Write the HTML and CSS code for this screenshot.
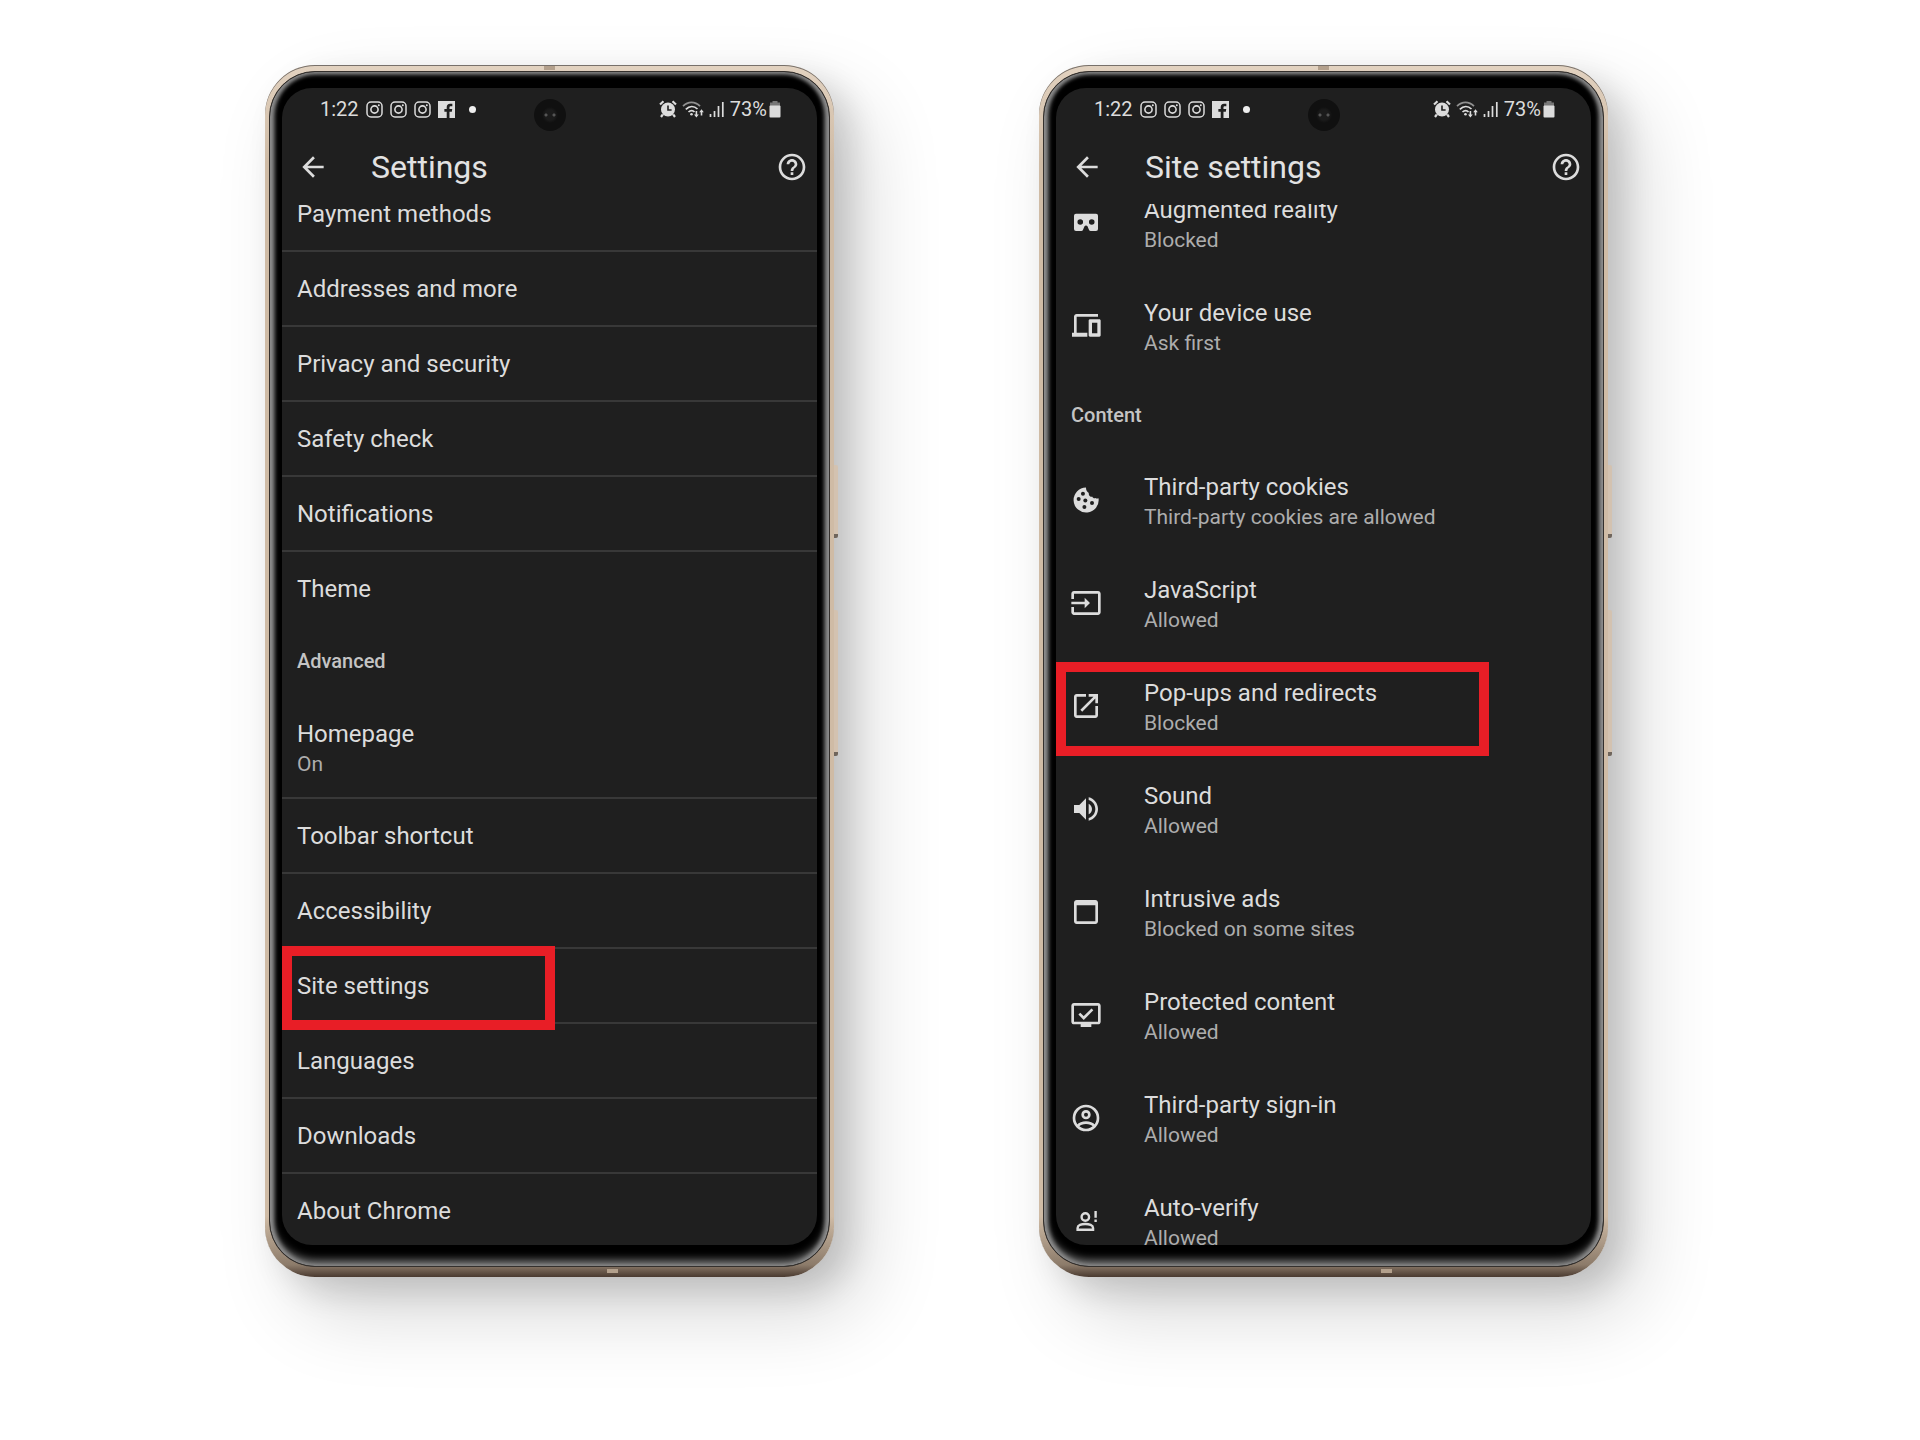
FILE: index.html
```html
<!doctype html>
<html lang="en">
  <head>
    <meta charset="UTF-8" />
    <meta name="viewport" content="width=device-width, initial-scale=1.0" />
    <title>Chrome site settings</title>
    <link rel="stylesheet" href="styles.css">
  </head>
  <body>
    <!-- Shared icons -->
    <svg class="sprite" aria-hidden="true">
      <symbol id="instagram" viewBox="0 0 17 17">
        <rect x="1" y="1" width="15" height="15" rx="4" fill="none" stroke="currentColor" stroke-width="1.5"/>
        <circle cx="8.5" cy="8.5" r="3.6" fill="none" stroke="currentColor" stroke-width="1.6"/>
        <circle cx="12.8" cy="4.3" r="1" fill="currentColor"/>
      </symbol>
      <symbol id="facebook" viewBox="0 0 16 16">
        <path fill="currentColor" d="M0 0h16v16h-5.200v-6h2.200l.400-2.400h-2.600v-1.500c0-.8.4-1.200 1.300-1.200h1.400V2.600h-2.200c-2 0-3.100 1.200-3.100 3.200v1.800H6V10h2.200v6H0z"/>
      </symbol>
      <symbol id="alarm" viewBox="0 0 18 18">
        <circle cx="9" cy="9.500" r="7" fill="currentColor"/>
        <path d="M1 4.500 4.500 1.300M17 4.500 13.500 1.300M3.800 14.500 2 17M14.200 14.500 16 17" stroke="currentColor" stroke-width="2.200"/>
        <path d="M9 5.500V10h3.600" fill="none" stroke="#1f1f1f" stroke-width="1.600"/>
      </symbol>
      <symbol id="wifi" viewBox="0 0 22 18">
        <g fill="none" stroke="currentColor" stroke-width="1.700">
          <path d="M1 6.200C6 1 13 1 18 6.200" opacity=".6"/>
          <path d="M3.800 9.300C7.500 5.600 12 5.600 15.500 9"/>
          <path d="M6.500 12c2-1.900 4.400-1.900 6 0"/>
        </g>
        <circle cx="9.500" cy="14.200" r="1.300" fill="currentColor"/>
        <path fill="currentColor" d="M13.600 11h1.600v3.500h1.600L14.400 17.500 12 14.500h1.600zM18.700 15.500v-3.300h-1.500l2.300-3 2.300 3h-1.500v3.300z"/>
      </symbol>
      <symbol id="signal" viewBox="0 0 16 18">
        <path d="M1.500 17v-3M5.500 17v-6M9.500 17V6M13.800 17V2" stroke="currentColor" stroke-width="1.700"/>
      </symbol>
      <symbol id="battery" viewBox="0 0 12 18">
        <path fill="#777" d="M3.500 1h5v1.500H11V6H1V2.500h2.500z"/>
        <rect x="0.500" y="5.500" width="11" height="12" rx="1" fill="currentColor"/>
      </symbol>
      <symbol id="back" viewBox="0 0 24 24">
        <path fill="currentColor" d="M20 11H7.830l5.590-5.590L12 4l-8 8 8 8 1.410-1.410L7.830 13H20v-2z"/>
      </symbol>
      <symbol id="help" viewBox="0 0 24 24">
        <path fill="currentColor" d="M11 18h2v-2h-2v2zm1-16C6.480 2 2 6.480 2 12s4.480 10 10 10 10-4.480 10-10S17.520 2 12 2zm0 18c-4.410 0-8-3.590-8-8s3.590-8 8-8 8 3.590 8 8-3.590 8-8 8zm0-14c-2.210 0-4 1.790-4 4h2c0-1.100.9-2 2-2s2 .9 2 2c0 2-3 1.750-3 5h2c0-2.250 3-2.500 3-5 0-2.210-1.790-4-4-4z"/>
      </symbol>
    </svg>

    <main class="showcase">
      <!-- Settings -->
      <section class="phone" aria-label="Settings">
        <span class="side-button side-button-power"></span>
        <span class="side-button side-button-volume"></span>
        <div class="bezel">
          <div class="screen">
            <div class="status-bar">
              <span class="camera"></span>
              <span class="time">1:22</span>
              <svg class="app-icon"><use href="#instagram"/></svg>
              <svg class="app-icon"><use href="#instagram"/></svg>
              <svg class="app-icon"><use href="#instagram"/></svg>
              <svg class="app-icon"><use href="#facebook"/></svg>
              <span class="more-dot"></span>
              <div class="status-right">
                <svg class="alarm-icon"><use href="#alarm"/></svg>
                <svg class="wifi-icon"><use href="#wifi"/></svg>
                <svg class="signal-icon"><use href="#signal"/></svg>
                <span class="charge">73%<svg class="battery-icon"><use href="#battery"/></svg></span>
              </div>
            </div>
            <header class="app-bar">
              <button class="icon-button" type="button" aria-label="Back"><svg class="icon"><use href="#back"/></svg></button>
              <h1>Settings</h1>
              <button class="icon-button" type="button" aria-label="Help"><svg class="icon"><use href="#help"/></svg></button>
            </header>
            <nav class="list">
              <div class="list-scroll list-scroll-settings">
                <a class="row" href="#">Payment methods</a>
                <a class="row" href="#">Addresses and more</a>
                <a class="row" href="#">Privacy and security</a>
                <a class="row" href="#">Safety check</a>
                <a class="row" href="#">Notifications</a>
                <a class="row row-last" href="#">Theme</a>
                <h2 class="section-title">Advanced</h2>
                <a class="row row-tall" href="#">Homepage<small>On</small></a>
                <a class="row" href="#">Toolbar shortcut</a>
                <a class="row" href="#">Accessibility</a>
                <a class="row row-marked" href="#">Site settings</a>
                <a class="row" href="#">Languages</a>
                <a class="row" href="#">Downloads</a>
                <a class="row row-last" href="#">About Chrome</a>
              </div>
            </nav>
          </div>
        </div>
      </section>

      <!-- Site settings -->
      <section class="phone" aria-label="Site settings">
        <span class="side-button side-button-power"></span>
        <span class="side-button side-button-volume"></span>
        <div class="bezel">
          <div class="screen">
            <div class="status-bar">
              <span class="camera"></span>
              <span class="time">1:22</span>
              <svg class="app-icon"><use href="#instagram"/></svg>
              <svg class="app-icon"><use href="#instagram"/></svg>
              <svg class="app-icon"><use href="#instagram"/></svg>
              <svg class="app-icon"><use href="#facebook"/></svg>
              <span class="more-dot"></span>
              <div class="status-right">
                <svg class="alarm-icon"><use href="#alarm"/></svg>
                <svg class="wifi-icon"><use href="#wifi"/></svg>
                <svg class="signal-icon"><use href="#signal"/></svg>
                <span class="charge">73%<svg class="battery-icon"><use href="#battery"/></svg></span>
              </div>
            </div>
            <header class="app-bar">
              <button class="icon-button" type="button" aria-label="Back"><svg class="icon"><use href="#back"/></svg></button>
              <h1>Site settings</h1>
              <button class="icon-button" type="button" aria-label="Help"><svg class="icon"><use href="#help"/></svg></button>
            </header>
            <nav class="list">
              <div class="list-scroll list-scroll-site">
                <a class="permission" href="#">
                  <svg class="icon" viewBox="0 0 24 24"><path fill="currentColor" fill-rule="evenodd" d="M4.500 5h15A1.500 1.500 0 0 1 21 6.500v10a1.500 1.500 0 0 1-1.500 1.500h-4c-.6 0-1-.3-1.200-.8l-1.200-2.700c-.4-.9-1.800-.9-2.200 0l-1.200 2.700c-.2.500-.6.800-1.200.800h-4A1.500 1.500 0 0 1 3 16.500v-10A1.500 1.500 0 0 1 4.500 5zM7.700 9.200a2.100 2.100 0 1 0 0 4.200 2.100 2.100 0 0 0 0-4.200zm8.600 0a2.100 2.100 0 1 0 0 4.200 2.100 2.100 0 0 0 0-4.200z"/></svg>
                  <span>Augmented reality<small>Blocked</small></span>
                </a>
                <a class="permission" href="#">
                  <svg class="icon" viewBox="0 0 24 24"><path fill="currentColor" d="M5 5h16V3H5c-1.100 0-2 .9-2 2v12H1.500v3H13v-3H5V5zm17 2h-7c-.55 0-1 .45-1 1v11c0 .55.45 1 1 1h7c.55 0 1-.45 1-1V8c0-.55-.45-1-1-1zm-1.500 10.500h-4v-8h4v8z"/></svg>
                  <span>Your device use<small>Ask first</small></span>
                </a>
                <h2 class="section-title">Content</h2>
                <a class="permission" href="#">
                  <svg class="icon" viewBox="0 0 24 24"><path fill="currentColor" d="M12 2.600a9.400 9.400 0 1 0 9.400 8c-.7.400-1.700.4-2.300-.1-.8.500-2 .1-2.300-.9-1.700.2-3-1.200-2.700-2.800-1.300-.7-2.200-2.400-2.100-4.200z"/><g fill="#1f1f1f"><circle cx="9.700" cy="7.300" r="1.500"/><circle cx="6.500" cy="11.300" r="1.500"/><circle cx="11.500" cy="12.300" r="1.500"/><circle cx="16.500" cy="14.300" r="1.500"/><circle cx="10.800" cy="17.300" r="1.500"/></g></svg>
                  <span>Third-party cookies<small>Third-party cookies are allowed</small></span>
                </a>
                <a class="permission" href="#">
                  <svg class="icon" viewBox="0 0 24 24"><path fill="currentColor" d="M21 3.010H3c-1.100 0-2 .9-2 2V9h2V4.990h18v14.030H3V15H1v4.010c0 1.100.9 1.980 2 1.980h18c1.100 0 2-.88 2-1.980v-14c0-1.110-.9-2-2-2zM11 16l4-4-4-4v3H1v2h10v3z"/></svg>
                  <span>JavaScript<small>Allowed</small></span>
                </a>
                <a class="permission permission-marked" href="#">
                  <svg class="icon" viewBox="0 0 24 24"><path fill="currentColor" d="M19 19H5V5h7V3H5c-1.110 0-2 .9-2 2v14c0 1.100.89 2 2 2h14c1.100 0 2-.9 2-2v-7h-2v7zM14 3v2h3.590l-9.830 9.830 1.410 1.410L19 6.410V10h2V3h-7z"/></svg>
                  <span>Pop-ups and redirects<small>Blocked</small></span>
                </a>
                <a class="permission" href="#">
                  <svg class="icon" viewBox="0 0 24 24"><path fill="currentColor" d="M3 9v6h4l5 5V4L7 9H3zm13.500 3c0-1.770-1.020-3.290-2.500-4.030v8.050c1.480-.73 2.500-2.250 2.500-4.020zM14 3.230v2.060c2.890.86 5 3.540 5 6.710s-2.110 5.850-5 6.710v2.060c4.010-.91 7-4.490 7-8.770s-2.990-7.860-7-8.770z"/></svg>
                  <span>Sound<small>Allowed</small></span>
                </a>
                <a class="permission" href="#">
                  <svg class="icon" viewBox="0 0 24 24"><path fill="currentColor" d="M19 3H5c-1.110 0-2 .9-2 2v14c0 1.100.89 2 2 2h14c1.100 0 2-.9 2-2V5c0-1.100-.9-2-2-2zm0 16H5V7h14v12z"/></svg>
                  <span>Intrusive ads<small>Blocked on some sites</small></span>
                </a>
                <a class="permission" href="#">
                  <svg class="icon" viewBox="0 0 24 24"><path fill="currentColor" d="M21 3H3c-1.100 0-2 .9-2 2v12c0 1.100.9 2 2 2h5v2h8v-2h5c1.100 0 2-.9 2-2V5c0-1.100-.9-2-2-2zm0 14H3V5h18v12z"/><path d="m7 11 3.300 3.300 6.500-6.500" fill="none" stroke="currentColor" stroke-width="2"/></svg>
                  <span>Protected content<small>Allowed</small></span>
                </a>
                <a class="permission" href="#">
                  <svg class="icon" viewBox="0 0 24 24" fill="none" stroke="currentColor" stroke-width="2"><circle cx="12" cy="12" r="9"/><circle cx="12" cy="9.500" r="2.500"/><path d="M5.800 18c3-3.300 9.400-3.300 12.400 0"/></svg>
                  <span>Third-party sign-in<small>Allowed</small></span>
                </a>
                <a class="permission" href="#">
                  <svg class="icon" viewBox="0 0 24 24" fill="none" stroke="currentColor" stroke-width="1.800"><circle cx="11.500" cy="9" r="2.800"/><path d="M5.700 18.600v-1.400c0-4 11.600-4 11.600 0v1.400zM19.200 4.500v5M19.200 10.800v2"/></svg>
                  <span>Auto-verify<small>Allowed</small></span>
                </a>
              </div>
            </nav>
          </div>
        </div>
      </section>
    </main>
  </body>
</html>
```

FILE: styles.css
```css
*,
*::before,
*::after {
  box-sizing: border-box;
}

body {
  margin: 0;
  background: #fff;
  color: #dcdcdc;
  font-family: Roboto, "Noto Sans", sans-serif;
  font-size: 24px;
  line-height: 30px;
}

.sprite {
  position: absolute;
  width: 0;
  height: 0;
}

.showcase {
  display: grid;
  grid-template-columns: 1fr 1fr;
  gap: 205px;
  align-items: start;
  padding: 65px 312px 160px 265px;
}

/* Phone body */
.phone {
  position: relative;
  display: flex;
  min-width: 0;
  aspect-ratio: 569 / 1212;
  padding: 6px 4px 10px;
  border-radius: 50px;
  background: linear-gradient(#e2d2c0, #cfbba5 8%, #cfbba5 95%, #8c7b6a 99%, #4a3a30);
  box-shadow:
    inset 0 1px 0 #77706a,
    16px 14px 32px rgba(0, 0, 0, 0.14),
    30px 36px 80px rgba(0, 0, 0, 0.16);
}

/* antenna bands */
.phone::before,
.phone::after {
  content: "";
  position: absolute;
  width: 11px;
  height: 4px;
  background: #b3a08c;
}

.phone::before {
  top: 1px;
  left: 49%;
}

.phone::after {
  bottom: 4px;
  right: 38%;
}

.side-button {
  position: absolute;
  left: 100%;
  width: 4px;
  background: #d3c2b0;
  border-bottom: 4px solid #6f655c;
  border-radius: 0 2px 2px 0;
}

.side-button-power {
  top: 33%;
  height: 6%;
}

.side-button-volume {
  top: 45%;
  height: 12%;
}

.bezel {
  display: flex;
  flex: 1;
  min-width: 0;
  padding: 16px 12px 21px;
  border: 1px solid #34302d;
  border-radius: 46px;
  background: #000;
  box-shadow:
    inset 4px 0 4px #8e8e8e,
    inset -4px 0 4px #8e8e8e,
    inset 0 3px 4px #555,
    inset 0 -6px 8px #777;
}

.screen {
  display: flex;
  flex: 1;
  flex-direction: column;
  min-width: 0;
  overflow: hidden;
  border-radius: 30px;
  background: #1f1f1f;
}

/* Status bar */
.status-bar {
  position: relative;
  display: flex;
  flex: none;
  align-items: center;
  gap: 7px;
  height: 42px;
  padding: 0 36px 0 38px;
  font-size: 20px;
}

.camera {
  position: absolute;
  top: 11px;
  left: calc(50% - 16px);
  width: 32px;
  height: 32px;
  border-radius: 50%;
  background:
    radial-gradient(circle at 12px 16px, #555 1px, transparent 2px),
    radial-gradient(circle at 20px 16px, #555 1px, transparent 2px),
    radial-gradient(circle, #1b1b1b 5px, #101010 8px);
}

.app-icon {
  width: 17px;
  height: 17px;
}

.more-dot {
  width: 7px;
  height: 7px;
  margin-left: 7px;
  border-radius: 50%;
  background: #eee;
}

.status-right {
  display: flex;
  align-items: center;
  gap: 5px;
  margin-left: auto;
}

.charge {
  display: flex;
  align-items: center;
  gap: 2px;
}

.alarm-icon {
  width: 18px;
  height: 18px;
}

.wifi-icon {
  width: 22px;
  height: 18px;
}

.signal-icon {
  width: 16px;
  height: 18px;
}

.battery-icon {
  width: 12px;
  height: 18px;
}

/* App bar */
.app-bar {
  display: flex;
  flex: none;
  align-items: center;
  height: 74px;
  padding: 0 9px 0 15px;
}

.app-bar h1 {
  flex: 1;
  margin: 0 0 0 42px;
  color: #e2e2e2;
  font-size: 32px;
  font-weight: 400;
  line-height: 40px;
}

.icon-button {
  display: flex;
  padding: 0;
  border: 0;
  background: none;
  color: inherit;
}

.icon {
  flex: none;
  width: 32px;
  height: 32px;
}

/* Lists, shown part way through their scroll */
.list {
  flex: 1;
  min-height: 0;
  overflow: hidden;
}

.list-scroll-settings {
  margin-top: -27px;
}

.list-scroll-site {
  margin-top: -31px;
}

a {
  color: inherit;
  text-decoration: none;
}

small {
  display: block;
  color: #adadad;
  font-size: 21px;
}

.row {
  position: relative;
  display: block;
  height: 75px;
  padding: 22px 15px 0;
  border-bottom: 2px solid #383838;
}

.row-last {
  border-bottom-color: transparent;
}

.row-tall {
  height: 104px;
  padding-top: 24px;
}

.section-title {
  margin: 0;
  padding: 19px 15px;
  color: #c4c4c4;
  font-size: 20px;
  font-weight: 500;
}

.list-scroll-site .section-title {
  padding: 21px 15px 20px;
}

.permission {
  position: relative;
  display: flex;
  align-items: flex-start;
  gap: 42px;
  height: 103px;
  padding: 22px 14px 0;
}

.permission .icon {
  margin-top: 12px;
}

/* Red frames round the highlighted entries */
.row-marked::after,
.permission-marked::after {
  content: "";
  position: absolute;
  left: 0;
  border: 10px solid #e81e26;
}

.row-marked::after {
  top: -3px;
  bottom: -8px;
  width: 51%;
}

.permission-marked::after {
  top: 6px;
  bottom: 3px;
  width: 81%;
}
```
